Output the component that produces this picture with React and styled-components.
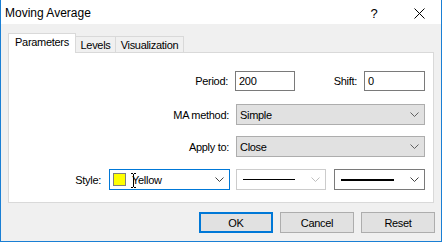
import React from "react";
import styled, { createGlobalStyle } from "styled-components";

const Global = createGlobalStyle`
  html, body { margin: 0; padding: 0; background: #ffffff; }
  * { box-sizing: border-box; }
`;

const Window = styled.div`
  width: 442px;
  height: 242px;
  background: #f0f0f0;
  border: 1px solid #1a7fd4;
  border-top: none;
  display: flex;
  flex-direction: column;
  font-family: "Liberation Sans", Arial, sans-serif;
  font-size: 11px;
  letter-spacing: -0.3px;
  color: #000;
`;

const TitleBar = styled.div`
  height: 24px;
  background: #ffffff;
  display: flex;
  align-items: center;
  padding: 2px 0 0 4px;
  flex: none;
`;

const Title = styled.div`
  flex: 1;
  font-size: 12px;
  letter-spacing: 0;
`;

const TitleButton = styled.div`
  width: ${(p) => p.$w}px;
  margin-right: ${(p) => p.$mr || 0}px;
  height: 22px;
  display: flex;
  align-items: center;
  justify-content: center;
  font-size: 13px;
  letter-spacing: 0;
`;

const TabStrip = styled.div`
  margin: 9px 0 0 7px;
  height: 19px;
  display: flex;
  align-items: flex-end;
  flex: none;
`;

const Tab = styled.div`
  position: relative;
  width: ${(p) => p.$w}px;
  height: ${(p) => (p.$active ? 20 : 16)}px;
  margin-bottom: ${(p) => (p.$active ? -1 : 0)}px;
  margin-left: ${(p) => p.$ml || 0}px;
  z-index: ${(p) => (p.$active ? 1 : 0)};
  background: ${(p) => (p.$active ? "#ffffff" : "#f0f0f0")};
  border: 1px solid #d9d9d9;
  border-bottom: none;
  display: flex;
  align-items: ${(p) => (p.$active ? "flex-start" : "center")};
  justify-content: center;
  padding-top: ${(p) => (p.$active ? 2 : 0)}px;
`;

const Panel = styled.div`
  margin: 0 7px 0 7px;
  height: 151px;
  background: #ffffff;
  border: 1px solid #d9d9d9;
  display: flex;
  flex-direction: column;
  padding: 17px 8px 0 0;
  flex: none;
`;

const Row = styled.div`
  display: flex;
  justify-content: flex-end;
  align-items: center;
  height: ${(p) => p.$h}px;
  margin-top: ${(p) => p.$mt || 0}px;
`;

const Label = styled.div`
  width: ${(p) => (p.$w ? `${p.$w}px` : "auto")};
  text-align: right;
  margin-right: ${(p) => p.$gap ?? 7}px;
  white-space: nowrap;
`;

const Input = styled.div`
  width: ${(p) => p.$w}px;
  height: 20px;
  border: 1px solid #7a7a7a;
  background: #ffffff;
  display: flex;
  align-items: center;
  padding-left: 3px;
`;

const Select = styled.div`
  position: relative;
  width: ${(p) => p.$w}px;
  height: 21px;
  margin-left: ${(p) => p.$ml || 0}px;
  border: 1px solid
    ${(p) =>
      p.$variant === "focus"
        ? "#0078d7"
        : p.$variant === "disabled"
        ? "#cccccc"
        : p.$variant === "white"
        ? "#7a7a7a"
        : "#adadad"};
  background: ${(p) => (p.$variant === "gray" ? "#e1e1e1" : "#ffffff")};
  display: flex;
  align-items: center;
  padding: 0 5px 0 ${(p) => p.$pl ?? 3}px;
  gap: 6px;
`;

const SelectText = styled.div`
  flex: 1;
  display: flex;
  align-items: center;
`;

const Swatch = styled.div`
  width: 13px;
  height: 13px;
  background: #ffff00;
  border: 1px solid #7f7f7f;
  margin-right: 6px;
`;

const LinePreview = styled.div`
  flex: 1;
  height: ${(p) => p.$t}px;
  background: #000;
  margin: 0 10px 0 3px;
`;

const Cursor = styled.svg`
  position: absolute;
  left: 21px;
  top: 3px;
`;

const ButtonRow = styled.div`
  display: flex;
  justify-content: flex-end;
  gap: 7px;
  margin: 9px 6px 0 0;
`;

const Button = styled.div`
  width: 74px;
  height: 21px;
  background: #e1e1e1;
  border: ${(p) => (p.$default ? "2px solid #0078d7" : "1px solid #adadad")};
  display: flex;
  align-items: center;
  justify-content: center;
`;

const Chevron = ({ color = "#606060" }) => (
  <svg width="9" height="5" viewBox="0 0 9 5" style={{ flex: "none" }}>
    <polyline points="0.5,0.5 4.5,4.5 8.5,0.5" fill="none" stroke={color} strokeWidth="1" />
  </svg>
);

export default function App() {
  return (
    <>
      <Global />
      <Window>
        <TitleBar>
          <Title>Moving Average</Title>
          <TitleButton $w={30} $mr={8}>?</TitleButton>
          <TitleButton $w={44}>
            <svg width="11" height="11" viewBox="0 0 11 11">
              <path d="M0.5 0.5 L10.5 10.5 M10.5 0.5 L0.5 10.5" stroke="#000" strokeWidth="1" />
            </svg>
          </TitleButton>
        </TitleBar>
        <TabStrip>
          <Tab $active $w={68}>Parameters</Tab>
          <Tab $w={41} $ml={-1}>Levels</Tab>
          <Tab $w={69} $ml={-1}>Visualization</Tab>
        </TabStrip>
        <Panel>
          <Row $h={20} $mt={1}>
            <Label>Period:</Label>
            <Input $w={60}>200</Input>
            <Label $w={62}>Shift:</Label>
            <Input $w={61}>0</Input>
          </Row>
          <Row $h={21} $mt={13}>
            <Label>MA method:</Label>
            <Select $w={189} $variant="gray">
              <SelectText>Simple</SelectText>
              <Chevron />
            </Select>
          </Row>
          <Row $h={21} $mt={11}>
            <Label>Apply to:</Label>
            <Select $w={189} $variant="gray">
              <SelectText>Close</SelectText>
              <Chevron />
            </Select>
          </Row>
          <Row $h={21} $mt={12}>
            <Label $gap={8}>Style:</Label>
            <Select $w={121} $variant="focus" $pl={3}>
              <SelectText>
                <Swatch />
                Yellow
              </SelectText>
              <Chevron color="#404040" />
              <Cursor width="5" height="15" viewBox="0 0 5 15">
                <path d="M0 0.5 H2 M3 0.5 H5 M2.5 1 V14 M0 14.5 H2 M3 14.5 H5" stroke="#000" strokeWidth="1" fill="none" />
              </Cursor>
            </Select>
            <Select $w={90} $ml={6} $variant="disabled">
              <LinePreview $t={1} />
              <Chevron color="#bfbfbf" />
            </Select>
            <Select $w={91} $ml={8} $variant="white">
              <LinePreview $t={2} />
              <Chevron color="#404040" />
            </Select>
          </Row>
        </Panel>
        <ButtonRow>
          <Button $default>OK</Button>
          <Button>Cancel</Button>
          <Button>Reset</Button>
        </ButtonRow>
      </Window>
    </>
  );
}
